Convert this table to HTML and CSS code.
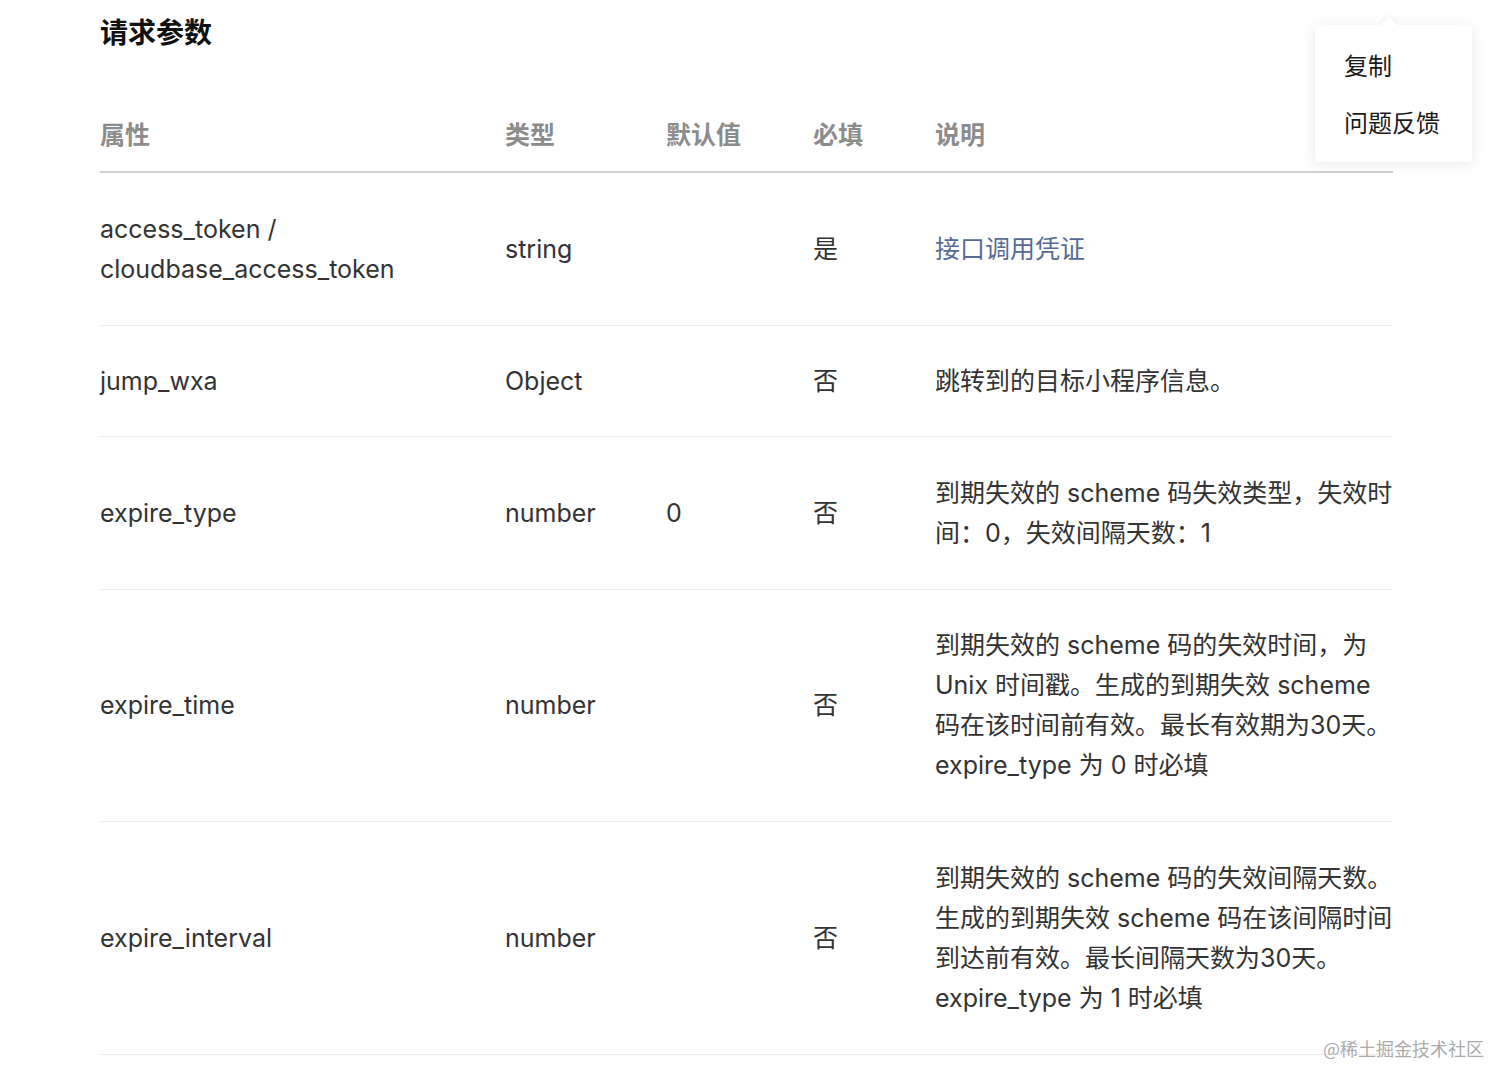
FILE: index.html
```html
<!DOCTYPE html>
<html lang="zh-CN">
<head>
<meta charset="utf-8">
<title>请求参数</title>
<link rel="stylesheet" href="styles.css">
</head>
<body>
<main class="doc">
  <h2 class="title">请求参数</h2>
  <table class="params">
    <colgroup>
      <col class="c-name"><col class="c-type"><col class="c-def"><col class="c-req"><col class="c-desc">
    </colgroup>
    <thead>
      <tr><th>属性</th><th>类型</th><th>默认值</th><th>必填</th><th>说明</th></tr>
    </thead>
    <tbody>
      <tr>
        <td>access_token /<br>cloudbase_access_token</td>
        <td>string</td>
        <td></td>
        <td>是</td>
        <td><a class="link" href="#">接口调用凭证</a></td>
      </tr>
      <tr class="row-single">
        <td>jump_wxa</td>
        <td>Object</td>
        <td></td>
        <td>否</td>
        <td>跳转到的目标小程序信息。</td>
      </tr>
      <tr>
        <td>expire_type</td>
        <td>number</td>
        <td>0</td>
        <td>否</td>
        <td>到期失效的 scheme 码失效类型，失效时<br>间：0，失效间隔天数：1</td>
      </tr>
      <tr class="row-tight">
        <td>expire_time</td>
        <td>number</td>
        <td></td>
        <td>否</td>
        <td>到期失效的 scheme 码的失效时间，为<br>Unix 时间戳。生成的到期失效 scheme<br>码在该时间前有效。最长有效期为30天。<br>expire_type 为 0 时必填</td>
      </tr>
      <tr>
        <td>expire_interval</td>
        <td>number</td>
        <td></td>
        <td>否</td>
        <td>到期失效的 scheme 码的失效间隔天数。<br>生成的到期失效 scheme 码在该间隔时间<br>到达前有效。最长间隔天数为30天。<br>expire_type 为 1 时必填</td>
      </tr>
    </tbody>
  </table>
</main>
<div class="menu">
  <div class="menu-item">复制</div>
  <div class="menu-item">问题反馈</div>
</div>
<div class="watermark">@稀土掘金技术社区</div>
</body>
</html>
```
FILE: styles.css
```css
html, body {
  margin: 0;
  padding: 0;
  background: #ffffff;
}
body {
  font-family: Inter, "Noto Sans CJK SC", sans-serif;
  color: #333333;
  width: 1512px;
  height: 1088px;
  overflow: hidden;
  position: relative;
}
.doc {
  padding: 13px 0 0 100px;
}
.title {
  margin: 0;
  font-size: 28px;
  line-height: 40px;
  font-weight: 700;
  color: #111111;
}
.params {
  margin-top: 62px;
  border-collapse: collapse;
  table-layout: fixed;
  width: 1293px;
  font-size: 25px;
  line-height: 40px;
}
.c-name { width: 405px; }
.c-type { width: 161px; }
.c-def { width: 147px; }
.c-req { width: 122px; }
.c-desc { width: 458px; }
.params th {
  text-align: left;
  font-weight: 700;
  color: #8c8c8c;
  padding: 0 0 16px 0;
  border-bottom: 2px solid #cfcfcf;
  font-size: 25px;
}
.params td {
  padding: 36px 0;
  vertical-align: middle;
  border-bottom: 1px solid #ededed;
  white-space: nowrap;
}
.params .row-single td {
  padding: 35px 0;
}
.params .row-tight td {
  padding: 35px 0 36px;
}
.link {
  color: #576b95;
  text-decoration: none;
}
.menu {
  position: absolute;
  left: 1315px;
  top: 25px;
  width: 157px;
  height: 137px;
  box-sizing: border-box;
  padding: 22px 0 0 29px;
  background: #ffffff;
  border-radius: 4px;
  box-shadow: 0 2px 14px rgba(0, 0, 0, 0.09);
  font-family: "Noto Sans CJK SC", sans-serif;
  font-size: 24px;
  line-height: 36px;
  color: #1a1a1a;
}
.menu::before {
  content: "";
  position: absolute;
  left: 68px;
  top: -6px;
  width: 12px;
  height: 12px;
  background: #ffffff;
  transform: rotate(45deg);
  box-shadow: -2px -2px 5px rgba(0, 0, 0, 0.04);
}
.menu-item {
  position: relative;
  margin-bottom: 21px;
}
.watermark {
  position: absolute;
  left: 1323px;
  top: 1036px;
  font-family: "Noto Sans CJK SC", sans-serif;
  font-size: 18px;
  line-height: 24px;
  color: #ababab;
  text-shadow: 0 0 2px #ffffff;
}
```
